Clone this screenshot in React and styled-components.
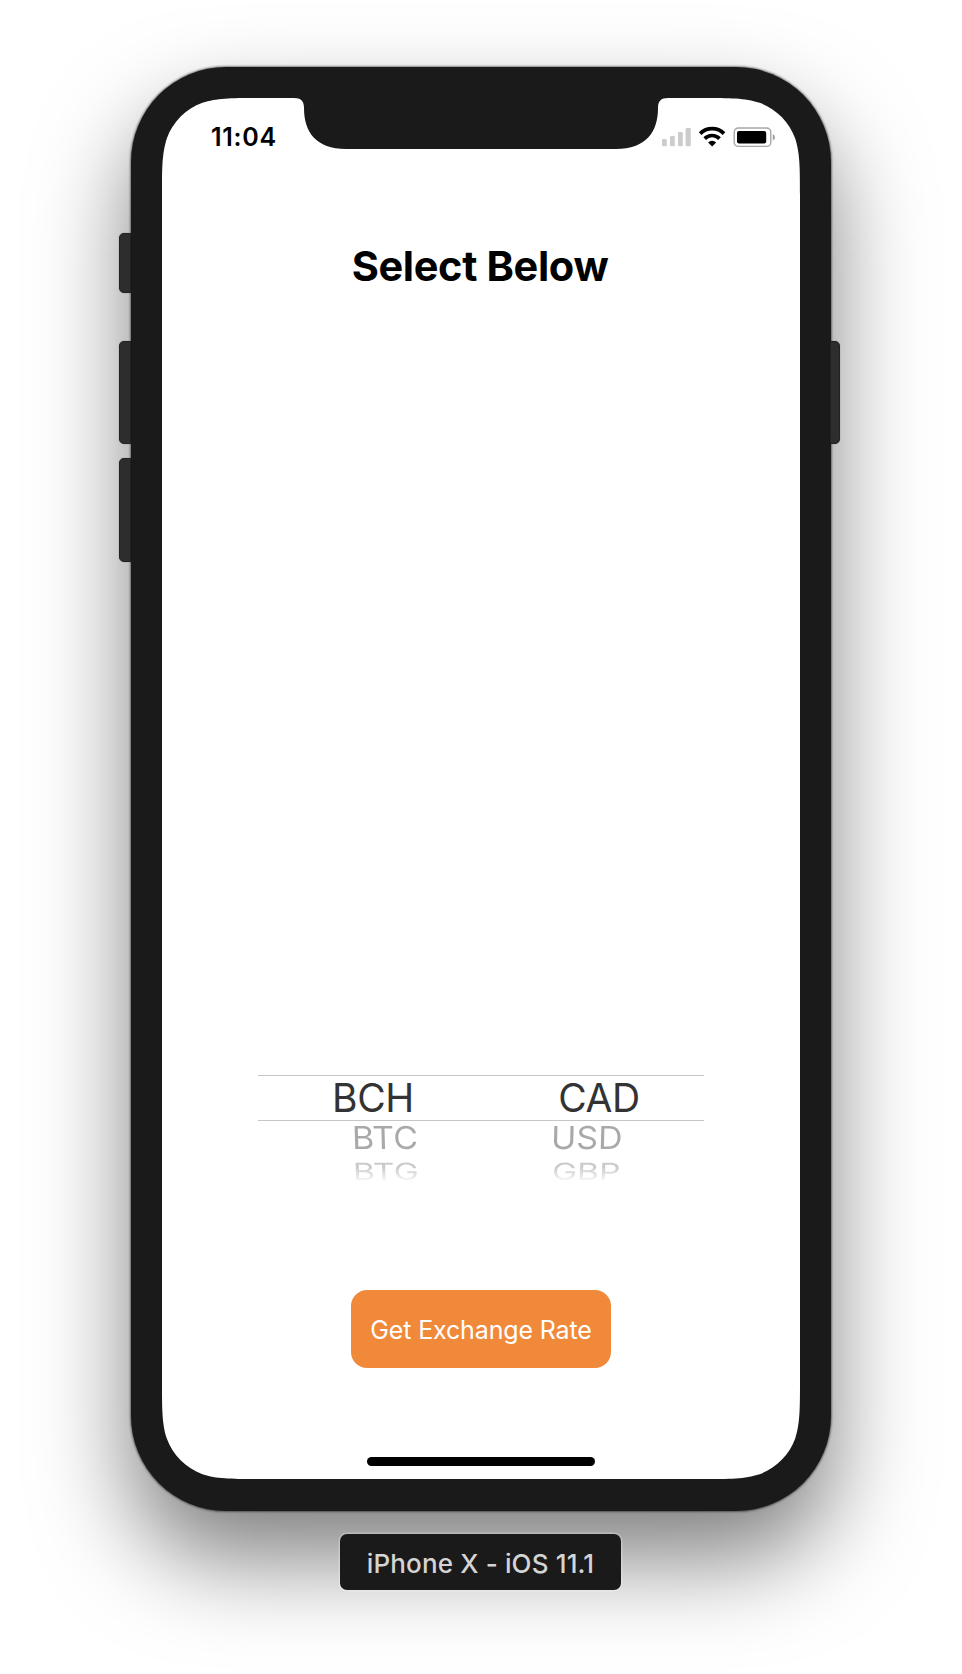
import React from "react";
import styled, { createGlobalStyle } from "styled-components";

const GlobalStyle = createGlobalStyle`
  * { box-sizing: border-box; }
  body {
    margin: 0;
    background: #fff;
    font-family: Inter, "Liberation Sans", sans-serif;
    -webkit-font-smoothing: antialiased;
  }
`;

/* Outline of the display: smooth corners and the sensor notch. */
const W = 638;
const H = 1381;
const R = 64;
const [A, B, C, D, E, F, G] = [1.5287, 1.0885, 0.8684, 0.6315, 0.0749, 0.3728, 0.1691].map(
  (k) => k * R
);
const screenShape = [
  `M0 ${A} C0 ${B} 0 ${C} ${E} ${D} C${G} ${F} ${F} ${G} ${D} ${E} C${C} 0 ${B} 0 ${A} 0`,
  `H132 C139 0 142 3 142 10 C142 34 154 51 184 51`,
  `H${W - 184} C${W - 154} 51 ${W - 142} 34 ${W - 142} 10 C${W - 142} 3 ${W - 139} 0 ${W - 132} 0`,
  `H${W - A} C${W - B} 0 ${W - C} 0 ${W - D} ${E} C${W - F} ${G} ${W - G} ${F} ${W - E} ${D} C${W} ${C} ${W} ${B} ${W} ${A}`,
  `V${H - A} C${W} ${H - B} ${W} ${H - C} ${W - E} ${H - D} C${W - G} ${H - F} ${W - F} ${H - G} ${W - D} ${H - E} C${W - C} ${H} ${W - B} ${H} ${W - A} ${H}`,
  `H${A} C${B} ${H} ${C} ${H} ${D} ${H - E} C${F} ${H - G} ${G} ${H - F} ${E} ${H - D} C0 ${H - C} 0 ${H - B} 0 ${H - A} Z`,
].join(" ");

const Page = styled.main`
  width: 962px;
  height: 1674px;
  padding-top: 67px;
  display: flex;
  flex-direction: column;
  align-items: center;
  overflow: hidden;
`;

const Device = styled.div`
  position: relative;
  width: 700px;
  height: 1444px;
  padding: 31px 31px 32px;
  flex: none;
  border-radius: 95px;
  background: #1a1a1a;
  box-shadow: 0 0 2px 1px rgba(0, 0, 0, 0.45), 0 48px 94px rgba(0, 0, 0, 0.5);
`;

const SideButton = styled.span`
  position: absolute;
  top: ${(p) => p.$top}px;
  ${(p) => (p.$right ? "right: -9px;" : "left: -12px;")}
  width: ${(p) => (p.$right ? 10 : 12)}px;
  height: ${(p) => p.$height}px;
  border: 1px solid #222;
  border-radius: ${(p) => (p.$right ? "0 5px 5px 0" : "5px 0 0 5px")};
  background: #2d2d2d;
  box-shadow: 0 0 1px rgba(0, 0, 0, 0.5);
`;

const Screen = styled.section`
  width: ${W}px;
  height: ${H}px;
  display: flex;
  flex-direction: column;
  align-items: center;
  background: #fff;
  clip-path: path("${screenShape}");
`;

const StatusBar = styled.header`
  width: 100%;
  height: 77px;
  padding: 0 25px 0 49px;
  display: flex;
  align-items: center;
  justify-content: space-between;
`;

const Time = styled.time`
  font-size: 25px;
  font-weight: 600;
  line-height: 30px;
  letter-spacing: 0.7px;
`;

const StatusIcons = styled.svg`
  display: block;
`;

const Title = styled.h1`
  margin: 66px 2px 0 0;
  font-size: 41.5px;
  font-weight: 700;
  line-height: 50px;
  letter-spacing: -0.35px;
  color: #000;
`;

const Picker = styled.div`
  width: 446px;
  margin-top: 784px;
`;

const PickerRow = styled.div`
  display: grid;
  grid-template-columns: repeat(2, ${(p) => p.$spread}px);
  justify-content: center;
  align-items: center;
  justify-items: center;
  height: ${(p) => p.$height}px;
  padding-left: 10px;
  padding-bottom: ${(p) => (p.$selected ? 1 : 0)}px;
  font-weight: 400;
  color: #333;
  border: solid #c6c6c6;
  border-width: ${(p) => (p.$selected ? "1px 0" : "0")};
`;

const Option = styled.span`
  font-size: ${(p) => p.$size}px;
  line-height: 1;
  letter-spacing: ${(p) => p.$tracking || 0}px;
  transform: skewX(${(p) => p.$skew || 0}deg) scaleY(${(p) => p.$squash || 1});
  ${(p) =>
    p.$fade &&
    `
    color: transparent;
    background: ${p.$fade};
    background-clip: text;
    -webkit-background-clip: text;
  `}
`;

const ExchangeButton = styled.button`
  width: 260px;
  height: 78px;
  margin-top: 100px;
  padding: 1px 0 0;
  border: 0;
  border-radius: 16px;
  background: #f08a3a;
  color: #fff;
  font: 400 25px/30px Inter, "Liberation Sans", sans-serif;
  letter-spacing: -0.15px;
  white-space: nowrap;
`;

const HomeIndicator = styled.div`
  width: 228px;
  height: 9px;
  margin: auto 0 13px;
  border-radius: 5px;
  background: #000;
`;

const DeviceLabel = styled.footer`
  position: relative;
  width: 281px;
  height: 56px;
  margin: 23px 1px 0 0;
  padding-top: 3px;
  display: flex;
  align-items: center;
  justify-content: center;
  flex: none;
  border-radius: 7px;
  background: #1a1a1a;
  box-shadow: 0 0 0 1.5px rgba(255, 255, 255, 0.25);
  color: #d4d4d4;
  font-size: 26px;
  font-weight: 450;
  line-height: 32px;
  letter-spacing: 0.15px;
  white-space: nowrap;
`;

const wheel = [
  { names: ["BCH", "CAD"], height: 46, spread: 226, size: 39, tracking: -0.4, selected: true },
  { names: ["BTC", "USD"], height: 33, spread: 202, size: 34, squash: 0.93, skew: 1.5, fade: "#a9a9a9" },
  {
    names: ["BTG", "GBP"],
    height: 36,
    spread: 200,
    size: 33.5,
    squash: 0.71,
    skew: 2,
    fade: "linear-gradient(#cacaca 30%, #f6f6f6 85%)",
  },
];

function StatusGlyphs() {
  return (
    <StatusIcons width="114" height="22" viewBox="661 126 114 22">
      <g fill="#ccc">
        <rect x="662" y="139" width="4.8" height="7.2" rx="1.3" />
        <rect x="670" y="136" width="4.8" height="10.2" rx="1.3" />
        <rect x="678" y="132" width="4.8" height="14.2" rx="1.3" />
        <rect x="685.6" y="128" width="5.2" height="18.2" rx="1.3" />
      </g>
      <g fill="none" stroke="#000" strokeWidth="3.7">
        <path d="M700.2 133.6 A16.8 16.8 0 0 1 724 133.6" />
        <path d="M704.7 138.6 A10.4 10.4 0 0 1 719.5 138.6" />
      </g>
      <path d="M708.1 142.4 A5.8 5.8 0 0 1 716.1 142.4 L712.1 146.4 Z" fill="#000" />
      <rect x="734.2" y="128" width="36.6" height="18.4" rx="4.2" fill="none" stroke="#a6a6a6" strokeWidth="1.4" />
      <rect x="737" y="131" width="29.2" height="12.4" rx="2" fill="#000" />
      <path d="M772.8 134 Q775 135 775 137.2 Q775 139.4 772.8 140.4 Z" fill="#a0a0a0" />
    </StatusIcons>
  );
}

export default function App() {
  return (
    <Page>
      <GlobalStyle />
      <Device>
        <SideButton $top={166} $height={60} />
        <SideButton $top={274} $height={103} />
        <SideButton $top={391} $height={104} />
        <SideButton $top={274} $height={103} $right />
        <Screen>
          <StatusBar>
            <Time>11:04</Time>
            <StatusGlyphs />
          </StatusBar>
          <Title>Select Below</Title>
          <Picker>
            {wheel.map((row) => (
              <PickerRow key={row.names[0]} $height={row.height} $spread={row.spread} $selected={row.selected}>
                {row.names.map((name, i) => (
                  <Option
                    key={name}
                    $size={row.size}
                    $tracking={row.tracking}
                    $squash={row.squash}
                    $fade={row.fade}
                    $skew={row.skew ? (i ? -row.skew : row.skew) : 0}
                  >
                    {name}
                  </Option>
                ))}
              </PickerRow>
            ))}
          </Picker>
          <ExchangeButton>Get Exchange Rate</ExchangeButton>
          <HomeIndicator />
        </Screen>
      </Device>
      <DeviceLabel>iPhone X - iOS 11.1</DeviceLabel>
    </Page>
  );
}
